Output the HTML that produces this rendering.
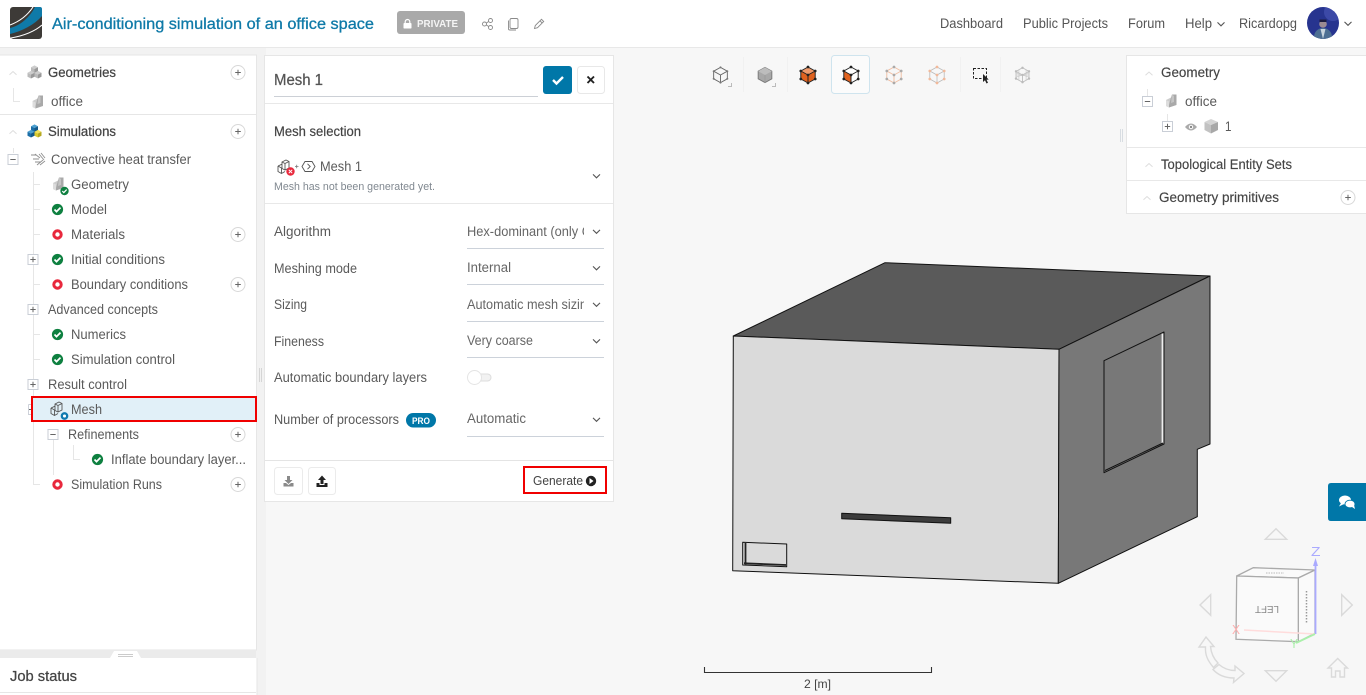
<!DOCTYPE html>
<html lang="en"><head><meta charset="utf-8"><title>Air-conditioning simulation of an office space</title>
<style>
html,body{margin:0;padding:0;width:1366px;height:695px;overflow:hidden;background:#f6f6f6}
svg{display:block}
text{font-family:"Liberation Sans",sans-serif;font-size:13.5px;fill:#5a5a5a}
.h{fill:#444;stroke:#444;stroke-width:.25px}
.n{fill:#555;font-size:13.5px}
.v{fill:#666}
.l{fill:none;stroke:#e6e6e6;stroke-width:1}
</style></head><body>
<svg width="1366" height="695" viewBox="0 0 1366 695" xmlns="http://www.w3.org/2000/svg">
<defs>
<g id="ok"><circle r="5.600" fill="#0e8040"/><path d="M-3 0 L-1 2.100 L3 -1.900" fill="none" stroke="#fff" stroke-width="1.700"/></g>
<g id="oks"><circle r="4.200" fill="#0e8040"/><path d="M-2.200 0 L-.7 1.600 L2.200 -1.400" fill="none" stroke="#fff" stroke-width="1.200"/></g>
<g id="bad"><circle r="3.700" fill="none" stroke="#e8283c" stroke-width="3"/></g>
<g id="plus"><circle r="7" fill="#fff" stroke="#d8d8d8"/><path d="M-2.800 0H2.800M0 -2.800V2.800" stroke="#666" stroke-width="1"/></g>
<g id="pb"><rect x="-5" y="-5" width="10" height="10" fill="#fff" stroke="#c9ced6"/><path d="M-2.700 0H2.700M0 -2.700V2.700" stroke="#666" stroke-width="1"/></g>
<g id="mb"><rect x="-5" y="-5" width="10" height="10" fill="#fff" stroke="#c9ced6"/><path d="M-2.700 0H2.700" stroke="#666" stroke-width="1"/></g>
<path id="up" d="M-3.500 1.800 L0 -1.500 L3.500 1.800" fill="none" stroke="#ddd" stroke-width="1"/>
<path id="dn" d="M-3.500 -1.600 L0 1.800 L3.500 -1.600" fill="none" stroke="#555" stroke-width="1.100"/>
<g id="blk"><path d="M-5 -1 L0 -3.500 L0 5 L-2 6.500 L-5 5Z" fill="#ccc"/><path d="M0 -3.500 L1 -6.500 L5.500 -6.500 L5.500 4 L-2 6.500 L-2 4Z" fill="#a9a9a9"/><path d="M-5 -1 L-2 .5 L-2 6.500 L-5 5Z" fill="#ddd"/><path d="M1 -6.500 L3 -5 L3 1 L0 2Z" fill="#c4c4c4"/></g>
<g id="cub"><path d="M0 -3.600 L3.500 -1.800 L0 0 L-3.500 -1.800Z" fill="var(--t,#ccc)"/><path d="M-3.500 -1.800 L0 0 L0 4 L-3.500 2.200Z" fill="var(--a,#bbb)"/><path d="M3.500 -1.800 L0 0 L0 4 L3.500 2.200Z" fill="var(--b,#999)"/></g>
<g id="msh" fill="none" stroke="#555" stroke-width=".9"><path d="M-3 -5 L1 -7 L4 -5.500 L4 1 L0 3 L-3 1.500Z M-3 -5 L0 -3.500 L4 -5.500 M0 -3.500 V3"/><path d="M-7 -1 L-3 -2.800 M-7 -1 L-7 4.500 L-3.500 6.500 L0 4.500 M-7 -1 L-3.500 1 V6.500"/></g>
<g id="vtx"><circle cx="0" cy="-10" r="1.700"/><circle cx="9" cy="-5" r="1.700"/><circle cx="9" cy="5" r="1.700"/><circle cx="0" cy="10" r="1.700"/><circle cx="-9" cy="5" r="1.700"/><circle cx="-9" cy="-5" r="1.700"/><circle cx="0" cy="0" r="1.700"/></g>
<path id="hx" d="M0 -10 L9 -5 V5 L0 10 L-9 5 V-5Z M-9 -5 L0 0 L9 -5 M0 0 V10" fill="none"/>
</defs>

<!-- page -->
<rect width="1366" height="695" fill="#f7f7f7"/>
<rect x="0" y="48" width="266" height="647" fill="#f2f2f2"/>

<!-- header -->
<rect width="1366" height="47" fill="#fff"/>
<rect y="47" width="1366" height="1" fill="#e8e8e8"/>
<g transform="translate(10,7)"><rect width="32" height="32" rx="3" fill="#3d3a37"/><path d="M0 21 C10 19 20 10 25 0 H30 Q32 0 32 2 V9 C24 18 12 24 0 27Z" fill="#0f7aa8"/><path d="M0 18 C8 15 17 9 23 0" fill="none" stroke="#fff" stroke-width="1.100"/><path d="M1 31 C12 29 24 25 32 18" fill="none" stroke="#fff" stroke-width="1.100"/></g>
<text x="52" y="29" textLength="322" lengthAdjust="spacingAndGlyphs" style="font-size:15.500px;fill:#0f7aa8;stroke:#0f7aa8;stroke-width:.3px">Air-conditioning simulation of an office space</text>
<rect x="397" y="11" width="68" height="23" rx="3" fill="#a9a9a9"/>
<rect x="403.500" y="23" width="8" height="5.500" rx=".8" fill="#fff"/><path d="M405.200 23 V21.800 a2.300 2.300 0 0 1 4.600 0 V23" fill="none" stroke="#fff" stroke-width="1.200"/>
<text x="417" y="27" textLength="41" lengthAdjust="spacingAndGlyphs" style="font-size:10.500px;font-weight:700;fill:#f4f4f4">PRIVATE</text>
<g fill="none" stroke="#8a8a8a" stroke-width=".9"><circle cx="484.500" cy="24" r="2"/><circle cx="490.500" cy="20.500" r="2"/><circle cx="490.500" cy="27.500" r="2"/><path d="M486.300 23 L488.700 21.500 M486.300 25 L488.700 26.500"/>
<rect x="510" y="18.500" width="8" height="10" rx="1.500"/><path d="M508.500 20.500 V29 Q508.500 30 510 30 H516"/>
<path d="M534.500 28.500 L535.300 25.500 L541.500 19.300 L543.700 21.500 L537.500 27.700Z M540 20.800 L542.200 23"/></g>
<text class="n" x="940" y="28" textLength="63" lengthAdjust="spacingAndGlyphs">Dashboard</text>
<text class="n" x="1023" y="28" textLength="85" lengthAdjust="spacingAndGlyphs">Public Projects</text>
<text class="n" x="1128" y="28" textLength="37" lengthAdjust="spacingAndGlyphs">Forum</text>
<text class="n" x="1185" y="28" textLength="27" lengthAdjust="spacingAndGlyphs">Help</text>
<use href="#dn" x="1221" y="24"/>
<text class="n" x="1239" y="28" textLength="58" lengthAdjust="spacingAndGlyphs">Ricardopg</text>
<clipPath id="av"><circle cx="1323" cy="23" r="16"/></clipPath>
<g clip-path="url(#av)"><rect x="1307" y="7" width="32" height="32" fill="#27348f"/><circle cx="1333" cy="12" r="9" fill="#4b58b8" opacity=".6"/><ellipse cx="1323" cy="37" rx="9" ry="9" fill="#4d6f93"/><path d="M1320.500 29 L1323 39 L1325.500 29Z" fill="#c8d4de"/><circle cx="1323" cy="24" r="3.800" fill="#9b8a92"/><rect x="1319.500" y="19.500" width="7" height="2.500" fill="#1c1c40"/></g>
<use href="#dn" x="1348" y="23.500"/>

<!-- left panel -->
<rect x="-2" y="55" width="258.500" height="595" fill="#fff" stroke="#e6e6e6"/>
<rect y="114" width="256" height="1" fill="#e6e6e6"/>
<use href="#up" x="13" y="73"/>
<g transform="translate(34.500,72)"><use href="#cub" x="0" y="-3"/><use href="#cub" x="-3.500" y="2.500"/><use href="#cub" x="3.500" y="2.500"/></g>
<text class="h" x="48" y="77" textLength="68" lengthAdjust="spacingAndGlyphs">Geometries</text>
<use href="#plus" x="238" y="72.500"/>
<path class="l" d="M13.500 88 V101.500 H20"/>
<use href="#blk" x="37.500" y="102"/>
<text x="51" y="106" textLength="32" lengthAdjust="spacingAndGlyphs">office</text>
<use href="#up" x="13" y="132"/>
<g transform="translate(34.500,131)"><use href="#cub" x="0" y="-3" style="--t:#4a9fd0;--a:#1c6fa8;--b:#14598a"/><use href="#cub" x="-3.500" y="2.500" style="--t:#4a9fd0;--a:#1c6fa8;--b:#14598a"/><use href="#cub" x="3.500" y="2.500" style="--t:#f0e25a;--a:#d9c930;--b:#b5a820"/></g>
<text class="h" x="48" y="136" textLength="68" lengthAdjust="spacingAndGlyphs">Simulations</text>
<use href="#plus" x="238" y="131.500"/>

<path class="l" d="M13.500 148 V153 M33.500 172 V484.500 H40 M33.500 184.500H40 M33.500 209.500H40 M33.500 234.500H40 M33.500 284.500H40 M33.500 334.500H40 M33.500 359.500H40 M53.500 440 V475 M73.500 445 V459.500 H80"/>
<use href="#mb" x="13" y="159.500"/>
<g fill="none" stroke="#8f8f8f" stroke-width=".9" transform="translate(38,159)"><path d="M-7 -4 H-2 M-5 0 H1 M-3 3 H3 M-3 -5 L2 -1 M1 -5 L6 1 M3 -6 L7 -1"/><path d="M-1 6 L5 1 M2 6 L7 2"/></g>
<text x="51" y="164" textLength="140" lengthAdjust="spacingAndGlyphs">Convective heat transfer</text>
<use href="#blk" x="58" y="184"/><use href="#oks" x="64.500" y="191"/>
<text x="71" y="189" textLength="58" lengthAdjust="spacingAndGlyphs">Geometry</text>
<use href="#ok" x="57.500" y="209.500"/><text x="71" y="214" textLength="36" lengthAdjust="spacingAndGlyphs">Model</text>
<use href="#bad" x="57.500" y="234.500"/><text x="71" y="239" textLength="54" lengthAdjust="spacingAndGlyphs">Materials</text><use href="#plus" x="238" y="234.500"/>
<use href="#pb" x="33" y="259.500"/><use href="#ok" x="57.500" y="259.500"/><text x="71" y="264" textLength="94" lengthAdjust="spacingAndGlyphs">Initial conditions</text>
<use href="#bad" x="57.500" y="284.500"/><text x="71" y="289" textLength="117" lengthAdjust="spacingAndGlyphs">Boundary conditions</text><use href="#plus" x="238" y="284.500"/>
<use href="#pb" x="33" y="309.500"/><text x="48" y="314" textLength="110" lengthAdjust="spacingAndGlyphs">Advanced concepts</text>
<use href="#ok" x="57.500" y="334.500"/><text x="71" y="339" textLength="55" lengthAdjust="spacingAndGlyphs">Numerics</text>
<use href="#ok" x="57.500" y="359.500"/><text x="71" y="364" textLength="104" lengthAdjust="spacingAndGlyphs">Simulation control</text>
<use href="#pb" x="33" y="384.500"/><text x="48" y="389" textLength="79" lengthAdjust="spacingAndGlyphs">Result control</text>
<rect x="32" y="397" width="224" height="24" fill="#e1f0f8" stroke="#f00000" stroke-width="2"/>
<path d="M28.500 404.500 H31 M28.500 404.500 V414.500 H31" fill="none" stroke="#c9ced6" stroke-width=".9"/>
<path d="M29 409.500 H31" stroke="#666"/>
<use href="#msh" x="58" y="409"/><circle cx="64.500" cy="416" r="2.700" fill="#fff" stroke="#0f7ab0" stroke-width="2.300"/>
<text x="71" y="414" textLength="31" lengthAdjust="spacingAndGlyphs">Mesh</text>
<use href="#mb" x="53" y="434.500"/><text x="68" y="439" textLength="71" lengthAdjust="spacingAndGlyphs">Refinements</text><use href="#plus" x="238" y="434.500"/>
<use href="#ok" x="97.500" y="459.500"/><text x="111" y="464" textLength="135" lengthAdjust="spacingAndGlyphs">Inflate boundary layer...</text>
<use href="#bad" x="57.500" y="484.500"/><text x="71" y="489" textLength="91" lengthAdjust="spacingAndGlyphs">Simulation Runs</text><use href="#plus" x="238" y="484.500"/>

<!-- job status -->
<rect y="650" width="256" height="8" fill="#ebebeb"/>
<path d="M110 658 L114 651 H137 L141 658Z" fill="#fff"/>
<path d="M118 654.500 H133 M118 656.500 H133" stroke="#bbb" stroke-width=".8"/>
<rect y="658" width="256.500" height="37" fill="#fff"/>
<rect x="256.500" y="658" width="1" height="37" fill="#e6e6e6"/>
<rect y="692" width="256" height="1" fill="#e6e6e6"/>
<text class="h" x="10" y="681" textLength="67" lengthAdjust="spacingAndGlyphs" style="font-size:14.500px">Job status</text>
<path d="M259.500 368 V382 M261.500 368 V382" stroke="#d5d5d5" stroke-width="1"/>

<!-- mesh panel -->
<rect x="264.500" y="55.500" width="349" height="446" fill="#fff" stroke="#e6e6e6"/>
<text class="h" x="274" y="85" textLength="49" lengthAdjust="spacingAndGlyphs" style="font-size:15.500px;fill:#555;stroke:#555">Mesh 1</text>
<rect x="274" y="96" width="264" height="1" fill="#ccd0d6"/>
<rect x="543" y="66" width="29" height="28" rx="3" fill="#0077a8"/>
<path d="M553 80 L556.500 83.500 L563 77" fill="none" stroke="#fff" stroke-width="2.400"/>
<rect x="577.500" y="66.500" width="27" height="27" rx="3" fill="#fff" stroke="#e8e8e8"/>
<path d="M587.500 76.500 L594 83 M594 76.500 L587.500 83" stroke="#222" stroke-width="1.900"/>
<rect x="265" y="103" width="348" height="1" fill="#e8e8e8"/>
<text class="h" x="274" y="136" textLength="87" lengthAdjust="spacingAndGlyphs" style="stroke-width:.2px">Mesh selection</text>
<use href="#msh" x="285" y="167"/>
<circle cx="290.500" cy="171.500" r="4.200" fill="#e8283c"/><path d="M288.800 169.800 L292.200 173.200 M292.200 169.800 L288.800 173.200" stroke="#fff" stroke-width="1"/>
<path d="M295 166.500 H298.500 M296.700 164.700 V168.300" stroke="#777" stroke-width=".8"/>
<path d="M302 166.500 L305 161.500 H312 L315 166.500 L312 171.500 H305Z M307.500 163.800 L310.200 166.500 L307.500 169.200" fill="none" stroke="#555" stroke-width=".9"/>
<text x="320" y="171" textLength="42" lengthAdjust="spacingAndGlyphs">Mesh 1</text>
<text x="274" y="190" textLength="161" lengthAdjust="spacingAndGlyphs" style="font-size:11px;fill:#808890">Mesh has not been generated yet.</text>
<use href="#dn" x="596.500" y="176"/>
<rect x="265" y="203" width="348" height="1" fill="#e8e8e8"/>

<text x="274" y="236" textLength="57" lengthAdjust="spacingAndGlyphs">Algorithm</text>
<text x="274" y="273" textLength="83" lengthAdjust="spacingAndGlyphs">Meshing mode</text>
<text x="274" y="309" textLength="33" lengthAdjust="spacingAndGlyphs">Sizing</text>
<text x="274" y="346" textLength="50" lengthAdjust="spacingAndGlyphs">Fineness</text>
<text x="274" y="382" textLength="153" lengthAdjust="spacingAndGlyphs">Automatic boundary layers</text>
<text x="274" y="424" textLength="125" lengthAdjust="spacingAndGlyphs">Number of processors</text>
<rect x="406" y="413" width="30" height="14.500" rx="7.200" fill="#0077a8"/>
<text x="412" y="424" textLength="18" lengthAdjust="spacingAndGlyphs" style="font-size:9.500px;font-weight:700;fill:#fff">PRO</text>

<clipPath id="c1"><rect x="467" y="220" width="117" height="24"/></clipPath>
<text class="v" x="467" y="236" textLength="124" lengthAdjust="spacingAndGlyphs" clip-path="url(#c1)">Hex-dominant (only C</text>
<text class="v" x="467" y="272" textLength="44" lengthAdjust="spacingAndGlyphs">Internal</text>
<clipPath id="c2"><rect x="467" y="294" width="117" height="24"/></clipPath>
<text class="v" x="467" y="309" textLength="127" lengthAdjust="spacingAndGlyphs" clip-path="url(#c2)">Automatic mesh sizing</text>
<text class="v" x="467" y="345" textLength="66" lengthAdjust="spacingAndGlyphs">Very coarse</text>
<text class="v" x="467" y="423" textLength="59" lengthAdjust="spacingAndGlyphs">Automatic</text>
<g fill="#ccd2da"><rect x="467" y="248" width="137" height="1"/><rect x="467" y="284" width="137" height="1"/><rect x="467" y="321" width="137" height="1"/><rect x="467" y="357" width="137" height="1"/><rect x="467" y="436" width="137" height="1"/></g>
<use href="#dn" x="596.500" y="231.500"/><use href="#dn" x="596.500" y="268"/><use href="#dn" x="596.500" y="304.500"/><use href="#dn" x="596.500" y="341"/><use href="#dn" x="596.500" y="419.500"/>
<rect x="474" y="374" width="17" height="7" rx="3.500" fill="#f2f2f2" stroke="#ddd"/>
<circle cx="474.500" cy="377.500" r="7" fill="#fff" stroke="#e4e4e4"/>

<rect x="265" y="460" width="348" height="1" fill="#e4e4e4"/>
<rect x="274.500" y="467.500" width="28" height="27" rx="3" fill="#fff" stroke="#ebebeb"/>
<rect x="308.500" y="467.500" width="27" height="27" rx="3" fill="#fff" stroke="#ebebeb"/>
<path d="M287 476 H290 V480 H292.500 L288.500 484 L284.500 480 H287Z M283.500 483 H286 L288.500 485 L291 483 H293.500 V486.500 H283.500Z" fill="#8a8a8a"/>
<path d="M320.500 484 H323.500 V480 H326 L322 475.500 L318 480 H320.500Z M316.500 483 H319.500 V485 H324.500 V483 H327.500 V487 H316.500Z" fill="#222"/>
<rect x="524" y="467" width="82" height="26" fill="#fff" stroke="#f00000" stroke-width="2"/>
<text x="533" y="485" textLength="50" lengthAdjust="spacingAndGlyphs" style="font-size:12.500px;fill:#444">Generate</text>
<circle cx="591" cy="481" r="5.200" fill="#222"/><path d="M589.500 478 L593.500 481 L589.500 484Z" fill="#fff"/>

<!-- viewer toolbar -->
<path d="M743.500 57 V92 M787.500 57 V92 M960.500 57 V92 M1000.500 57 V92" stroke="#f1f1f1"/>
<rect x="831.500" y="55.500" width="38" height="38" rx="3" fill="#fbfbfb" stroke="#cfe4ee"/>
<g transform="translate(720.500,75) scale(.76)" stroke="#666" stroke-width="1.200"><use href="#hx"/></g>
<g fill="#777"><circle cx="713.700" cy="71.200" r="1"/><circle cx="727.300" cy="71.200" r="1"/><circle cx="713.700" cy="78.800" r="1"/><circle cx="727.300" cy="78.800" r="1"/><circle cx="720.500" cy="67.400" r="1"/><circle cx="720.500" cy="82.600" r="1"/></g>
<path d="M728 86.500 H731.500 V83" fill="none" stroke="#bbb"/>
<g transform="translate(765,75) scale(.76)"><path d="M0 -10 L9 -5 V5 L0 10 L-9 5 V-5Z" fill="#a8a8a8" stroke="#777" stroke-width="1.200"/><path d="M-9 -5 L0 0 L9 -5 L0 -10Z" fill="#bdbdbd"/><path d="M0 0 V10" stroke="#999"/></g>
<path d="M772 86.500 H775.500 V83" fill="none" stroke="#bbb"/>
<g transform="translate(808,75) scale(.8)"><path d="M0 -10 L9 -5 V5 L0 10 L-9 5 V-5Z" fill="#e0621f"/><path d="M-9 -5 L0 0 L9 -5 L0 -10Z" fill="#ef9a6c"/><use href="#hx" stroke="#222" stroke-width="1.200"/><use href="#vtx" fill="#222"/></g>
<g transform="translate(851,75) scale(.8)"><path d="M0 -10 L9 -5 V5 L0 10 L-9 5 V-5Z" fill="#fff"/><path d="M-9 -5 L0 0 V10 L-9 5Z" fill="#e0621f"/><use href="#hx" stroke="#222" stroke-width="1.200"/><use href="#vtx" fill="#222"/></g>
<g transform="translate(894,75) scale(.8)"><use href="#hx" stroke="#f0bfa4" stroke-width="1.200"/><use href="#vtx" fill="#aaa"/></g>
<g transform="translate(937,75) scale(.8)"><use href="#hx" stroke="#bbb" stroke-width="1"/><use href="#vtx" fill="#f2b99a"/></g>
<rect x="973.500" y="68.500" width="13" height="10" fill="none" stroke="#222" stroke-dasharray="2.500 1.500"/>
<path d="M983 74 L983 82 L985 80.300 L986.500 83.500 L988 82.800 L986.500 79.700 L988.700 79.500Z" fill="#222"/>
<g transform="translate(1022.500,75) scale(.72)"><use href="#hx" stroke="#bbb" stroke-width="1.200"/><path d="M-5 -8 V8 M5 -8 V8 M-9 0 L9 0 M-9 -3 L9 3 M-9 3 L9 -3" stroke="#ccc" stroke-width="1" fill="none"/><use href="#vtx" fill="#bbb"/></g>

<!-- right panel -->
<path d="M1120.500 129 V142 M1122.500 129 V142" stroke="#d8dde2"/>
<rect x="1126.500" y="55.500" width="242" height="158" fill="#fff" stroke="#e6e6e6"/>
<use href="#up" x="1149" y="73.500"/>
<text class="h" x="1161" y="77" textLength="59" lengthAdjust="spacingAndGlyphs" style="stroke-width:.15px">Geometry</text>
<path class="l" d="M1147.500 89 V96 M1167.500 114 V121"/>
<use href="#mb" x="1147.500" y="101.500"/>
<use href="#blk" x="1171" y="101"/>
<text x="1185" y="106" textLength="32" lengthAdjust="spacingAndGlyphs">office</text>
<use href="#pb" x="1167.500" y="126.500"/>
<path d="M1185 127 Q1191 120 1197 127 Q1191 134 1185 127Z" fill="#aaa"/><circle cx="1191" cy="127" r="2.200" fill="#fff"/><circle cx="1191" cy="127" r="1.200" fill="#888"/>
<path d="M1204.500 122 L1211 119 L1218 122 L1211 125Z" fill="#d4d4d4"/><path d="M1204.500 122 L1211 125 V133.500 L1204.500 130Z" fill="#c2c2c2"/><path d="M1218 122 L1211 125 V133.500 L1218 130Z" fill="#a8a8a8"/>
<text x="1225" y="131" textLength="6.500" lengthAdjust="spacingAndGlyphs">1</text>
<rect x="1127" y="147" width="239" height="1" fill="#e8e8e8"/>
<use href="#up" x="1149" y="165"/>
<text class="h" x="1161" y="169" textLength="131" lengthAdjust="spacingAndGlyphs" style="stroke-width:.15px">Topological Entity Sets</text>
<rect x="1127" y="180" width="239" height="1" fill="#e8e8e8"/>
<use href="#up" x="1147" y="198"/>
<text class="h" x="1159" y="202" textLength="120" lengthAdjust="spacingAndGlyphs" style="stroke-width:.15px">Geometry primitives</text>
<use href="#plus" x="1348" y="197.500"/>

<!-- model -->
<g stroke="#111" stroke-width="1" stroke-linejoin="round">
<path d="M733.300 336 L885 262.700 L1210 276 L1059 349.300Z" fill="#5a5a5a"/>
<path d="M733.300 336 L1059 349.300 L1058.300 583.300 L732.700 570.700Z" fill="#dadada"/>
<path d="M1059 349.300 L1210 276 V444 L1197.300 449.300 V516.700 L1058.300 583.300Z" fill="#787878"/>
<path d="M1104 360.700 L1164 332 V444 L1104 472.700Z" fill="#787878"/>
<path d="M841.700 513.300 L950.700 517.700 V523.300 L841.700 518.700Z" fill="#3c3c3c"/>
<path d="M742.700 542.300 L786.700 544 V566.700 L742.700 565Z" fill="#dadada"/>
</g>
<path d="M1162.500 333.500 V443.500" stroke="#eee" stroke-width="1.800"/>
<path d="M1105 470.500 L1163 443" stroke="#111" stroke-width="1"/>
<path d="M745.500 543 V565 M744 563.300 L786 565" stroke="#222" stroke-width="1.800"/>

<!-- scale -->
<path d="M704.500 667 V673 M931.500 667 V673 M704 672.500 H932" stroke="#333" stroke-width="1.100" fill="none"/>
<text x="804" y="688" textLength="27" lengthAdjust="spacingAndGlyphs" style="font-size:12px;fill:#444">2 [m]</text>

<!-- chat -->
<path d="M1366 483 H1331 Q1328 483 1328 486 V518 Q1328 521 1331 521 H1366Z" fill="#0077a8"/>
<ellipse cx="1345" cy="500" rx="6" ry="4.500" fill="#fff"/><path d="M1341 503 L1339 506.500 L1344 504Z" fill="#fff"/>
<ellipse cx="1350" cy="504" rx="5" ry="3.800" fill="#fff" stroke="#0077a8" stroke-width=".8"/><path d="M1352 507 L1355 509 L1354 505Z" fill="#fff"/>

<!-- nav cube -->
<g fill="none" stroke="#dadada" stroke-width="1.400">
<path d="M1265.300 539.300 L1276 528.700 L1286.700 539.300Z"/>
<path d="M1265.300 670.700 H1286.700 L1276 681.300Z"/>
<path d="M1210.700 594.700 V615.300 L1200 605Z"/>
<path d="M1341.700 594.700 V615.300 L1352.300 605Z"/>
<path d="M1331.500 668 V677 H1335.500 V671 H1340 V677 H1344.500 V668 H1347.500 L1337.700 658.500 L1328 668Z"/>
<path d="M1213.500 667.500 C1207 660 1205 654 1205.500 647 H1199 L1206 637 L1214 646.500 H1210.500 C1211 652 1213 658 1218 663Z"/>
<path d="M1213 669.500 C1218 675 1225 678 1234 678 L1233.500 682.500 L1244 673.500 L1235 666 V670.500 C1228 670.500 1223 668 1219 664.500Z"/>
</g>
<g fill="#fafafa" stroke="#aaa" stroke-width="1.300">
<path d="M1236.700 576 L1253.300 567.700 L1315 570 L1298.300 578Z"/>
<path d="M1298.300 578 L1315 570 V633.300 L1298.300 641.700Z"/>
<path d="M1236.700 576 L1298.300 578 V641.700 L1236 639.300Z"/>
</g>
<text transform="translate(1267,610) rotate(180)" x="-12" y="4" textLength="24" lengthAdjust="spacingAndGlyphs" style="font-size:10px;fill:#888">LEFT</text>
<path d="M1306.500 591 V623" stroke="#999" stroke-width="1.500" stroke-dasharray="1.500 1.500"/>
<path d="M1266 573 H1284" stroke="#bbb" stroke-width="1" stroke-dasharray="1.500 1"/>
<path d="M1315.500 634 V563" stroke="#aaaaff" stroke-width="1.800"/><path d="M1315.500 558 L1313 566 H1318Z" fill="#aaaaff"/>
<text x="1311" y="556" textLength="9.500" lengthAdjust="spacingAndGlyphs" style="font-size:13px;fill:#aaaaff">Z</text>
<path d="M1315 634 L1244 630" stroke="#ffdcdc" stroke-width="1.500"/>
<text x="1232" y="634" textLength="8" lengthAdjust="spacingAndGlyphs" style="font-size:13px;fill:#ffb0b0">X</text>
<path d="M1315 634 L1296 643" stroke="#aaf0aa" stroke-width="1.800"/>
<text x="1290" y="648" textLength="8" lengthAdjust="spacingAndGlyphs" style="font-size:13px;fill:#aaf0aa">Y</text>
</svg>
</body></html>
